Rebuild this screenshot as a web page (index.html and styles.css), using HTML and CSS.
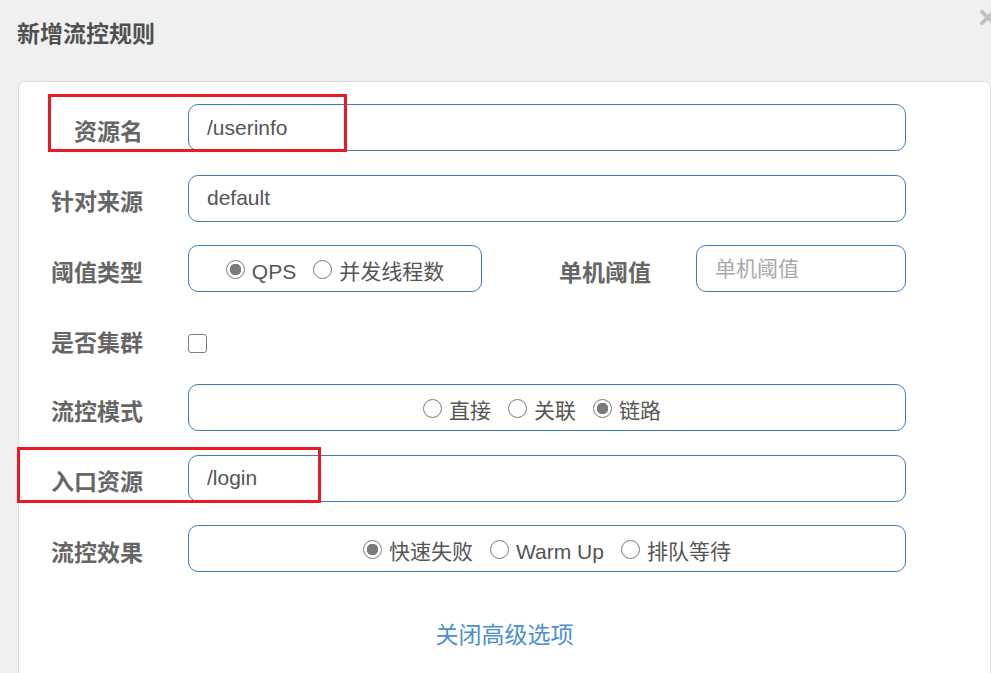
FILE: index.html
```html
<!DOCTYPE html>
<html lang="zh-CN">
<head>
<meta charset="utf-8">
<title>新增流控规则</title>
<link rel="stylesheet" href="styles.css">
</head>
<body>
<div class="modal">
  <div class="modal-header">
    <h4 class="modal-title">新增流控规则</h4>
    <span class="close">×</span>
  </div>
  <div class="card">
    <form class="form">
      <div class="row">
        <label class="label">资源名</label>
        <input class="field" type="text" value="/userinfo">
      </div>
      <div class="row">
        <label class="label">针对来源</label>
        <input class="field" type="text" value="default">
      </div>
      <div class="row">
        <label class="label">阈值类型</label>
        <div class="box box-small">
          <label class="opt"><input class="radio" type="radio" name="grade" checked><span>QPS</span></label>
          <label class="opt"><input class="radio" type="radio" name="grade"><span>并发线程数</span></label>
        </div>
        <label class="label label-mid">单机阈值</label>
        <input class="field" type="text" placeholder="单机阈值">
      </div>
      <div class="row row-check">
        <label class="label">是否集群</label>
        <input class="check" type="checkbox">
      </div>
      <div class="row">
        <label class="label">流控模式</label>
        <div class="box box-shift">
          <label class="opt"><input class="radio" type="radio" name="mode"><span>直接</span></label>
          <label class="opt"><input class="radio" type="radio" name="mode"><span>关联</span></label>
          <label class="opt"><input class="radio" type="radio" name="mode" checked><span>链路</span></label>
        </div>
      </div>
      <div class="row">
        <label class="label">入口资源</label>
        <input class="field" type="text" value="/login">
      </div>
      <div class="row">
        <label class="label">流控效果</label>
        <div class="box">
          <label class="opt"><input class="radio" type="radio" name="effect" checked><span>快速失败</span></label>
          <label class="opt"><input class="radio" type="radio" name="effect"><span>Warm Up</span></label>
          <label class="opt"><input class="radio" type="radio" name="effect"><span>排队等待</span></label>
        </div>
      </div>
    </form>
    <div class="more"><a class="link" href="#">关闭高级选项</a></div>
  </div>
  <div class="mark mark-1"></div>
  <div class="mark mark-2"></div>
</div>
</body>
</html>
```

FILE: styles.css
```css
html, body {
  margin: 0;
  padding: 0;
  background: #f0f0f0;
  overflow: hidden;
}

body {
  font-family: "Liberation Sans", "Noto Sans CJK SC", sans-serif;
  color: #555;
}

.modal {
  position: relative;
  width: 991px;
  height: 673px;
}

.modal-header {
  height: 68px;
  display: flex;
  align-items: center;
  padding-left: 17px;
}

.modal-title {
  margin: 0;
  font-size: 23px;
  font-weight: bold;
  color: #505050;
  line-height: 1;
}

.close {
  position: absolute;
  right: -6px;
  top: 1px;
  font-size: 32px;
  font-weight: bold;
  color: #c0c0c0;
  line-height: 1;
}

.card {
  margin-top: 13px;
  margin-left: 18px;
  background: #fff;
  border: 1px solid #dcdcdc;
  border-radius: 7px;
  padding: 22px 84px 80px 0;
}

.form {
  display: flex;
  flex-direction: column;
  gap: 23.5px;
}

.row {
  display: flex;
  align-items: center;
  height: 47px;
  gap: 45px;
}

.label {
  width: 124px;
  flex: none;
  text-align: right;
  font-size: 23px;
  font-weight: bold;
  color: #666;
  padding-top: 9px;
  line-height: 1;
}

.label-mid {
  width: 169px;
  margin-left: -45px;
}

.field {
  flex: 1;
  min-width: 0;
  box-sizing: border-box;
  height: 47px;
  border: 1px solid #3a7dbd;
  border-radius: 10px;
  padding: 0 18px;
  font-family: "Liberation Sans", "Noto Sans CJK SC", sans-serif;
  font-size: 21px;
  color: #555;
  background: #fff;
  outline: none;
}

.field::placeholder {
  color: #a9a9a9;
}

.box {
  flex: 1;
  box-sizing: border-box;
  height: 47px;
  border: 1px solid #3a7dbd;
  border-radius: 10px;
  display: flex;
  align-items: center;
  justify-content: center;
  gap: 17px;
  font-size: 21px;
  color: #555;
}

.box-small {
  flex: none;
  width: 294px;
}

.box-shift {
  padding-right: 10px;
}

.opt {
  display: flex;
  align-items: center;
  gap: 7px;
  padding-top: 5px;
}

.opt span {
  line-height: 1;
}

.radio {
  appearance: none;
  -webkit-appearance: none;
  margin: 0 0 4px 0;
  width: 19px;
  height: 19px;
  box-sizing: border-box;
  border: 1.5px solid #7a7a7a;
  border-radius: 50%;
  background: #fff;
}

.radio:checked {
  background: radial-gradient(circle, #7a7a7a 0 5.5px, #fff 6px);
}

.row-check {
  margin-bottom: -2px;
}

.check {
  appearance: none;
  -webkit-appearance: none;
  margin: 9px 0 0 0;
  width: 19px;
  height: 19px;
  box-sizing: border-box;
  border: 1.5px solid #7a7a7a;
  border-radius: 3px;
  background: #fff;
}

.more {
  text-align: center;
  margin-top: 46px;
  padding-left: 84px;
}

.link {
  font-size: 23px;
  color: #4a8fd0;
  text-decoration: none;
  line-height: 34px;
}

.mark {
  position: absolute;
  box-sizing: border-box;
  border: 3px solid #e81b25;
}

.mark-1 {
  left: 48px;
  top: 94px;
  width: 299px;
  height: 58px;
}

.mark-2 {
  left: 17px;
  top: 447px;
  width: 304px;
  height: 56px;
}
```
